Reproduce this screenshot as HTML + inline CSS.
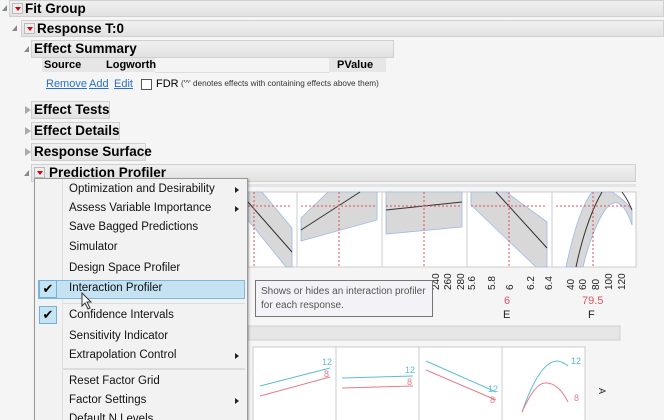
<!DOCTYPE html><html><head><style>
html,body{margin:0;width:664px;height:420px;overflow:hidden}
body{background:#f5f5f5;font-family:"Liberation Sans",sans-serif;position:relative}
.a{position:absolute}
.bar{position:absolute;background:linear-gradient(#f0f0f0,#e2e2e2);border:1px solid #d0d0d0;box-sizing:border-box}
.h{position:absolute;font-weight:bold;font-size:13.5px;color:#000;white-space:nowrap}
.tri{position:absolute;width:0;height:0}
.dn{border-left:5px solid transparent;border-right:0;border-bottom:6px solid #888;}
.rt{border-top:4px solid transparent;border-bottom:4px solid transparent;border-left:6px solid #aaa}
.rb{position:absolute;width:11px;height:11px;background:#eee;border:1px solid #bbb;box-sizing:border-box}
.rb:after{content:"";position:absolute;left:2px;top:3px;border-left:3px solid transparent;border-right:3px solid transparent;border-top:4px solid #d00}
.mi{position:absolute;left:69px;font-size:11.5px;color:#111;white-space:nowrap}
.ar{position:absolute;left:235px;border-top:3px solid transparent;border-bottom:3px solid transparent;border-left:4px solid #222}
.ck{position:absolute;left:39px;width:18px;height:18px;background:#c6e3f3;border:1px solid #6fb3dc;box-sizing:border-box;font-size:13px;text-align:center;line-height:16px;color:#000}
</style></head><body>
<div class="bar" style="left:9px;top:0;width:655px;height:17px"></div>
<div class="tri dn" style="left:2px;top:5px"></div>
<div class="rb" style="left:12px;top:3px"></div>
<div class="h" style="left:25px;top:1px">Fit Group</div>
<div class="bar" style="left:21px;top:20px;width:643px;height:17px"></div>
<div class="tri dn" style="left:12px;top:25px"></div>
<div class="rb" style="left:24px;top:23px"></div>
<div class="h" style="left:37px;top:21px">Response T:0</div>
<div class="bar" style="left:31px;top:40px;width:363px;height:18px"></div>
<div class="tri dn" style="left:24px;top:46px"></div>
<div class="h" style="left:34px;top:41px">Effect Summary</div>
<div class="a" style="left:42px;top:58px;width:344px;height:14px;background:#e6e6e6"></div>
<div class="a" style="left:155px;top:58px;width:174px;height:14px;background:#f4f4f4;border-bottom:1px solid #ddd"></div>
<div class="a" style="left:44px;top:59px;font-size:11px;font-weight:bold">Source</div>
<div class="a" style="left:106px;top:59px;font-size:11px;font-weight:bold">Logworth</div>
<div class="a" style="left:337px;top:59px;font-size:11px;font-weight:bold">PValue</div>
<div class="a" style="left:46px;top:78px;font-size:11px;color:#2a6fc9;text-decoration:underline">Remove</div>
<div class="a" style="left:89px;top:78px;font-size:11px;color:#2a6fc9;text-decoration:underline">Add</div>
<div class="a" style="left:114px;top:78px;font-size:11px;color:#2a6fc9;text-decoration:underline">Edit</div>
<div class="a" style="left:141px;top:79px;width:11px;height:11px;background:#fff;border:1px solid #555;box-sizing:border-box"></div>
<div class="a" style="left:156px;top:78px;font-size:11px">FDR</div>
<div class="a" style="left:181px;top:79px;font-size:8.2px;color:#333;white-space:nowrap">('^' denotes effects with containing effects above them)</div>
<div class="bar" style="left:31px;top:101px;width:79px;height:18px"></div>
<div class="tri rt" style="left:25px;top:106px"></div>
<div class="h" style="left:34px;top:102px">Effect Tests</div>
<div class="bar" style="left:31px;top:122px;width:89px;height:18px"></div>
<div class="tri rt" style="left:25px;top:127px"></div>
<div class="h" style="left:34px;top:123px">Effect Details</div>
<div class="bar" style="left:31px;top:143px;width:115px;height:18px"></div>
<div class="tri rt" style="left:25px;top:148px"></div>
<div class="h" style="left:34px;top:144px">Response Surface</div>
<div class="bar" style="left:31px;top:164px;width:605px;height:18px"></div>
<div class="tri dn" style="left:24px;top:170px"></div>
<div class="rb" style="left:34px;top:167px"></div>
<div class="h" style="left:49px;top:165px">Prediction Profiler</div>
<svg class="a" style="left:240px;top:180px" width="424" height="240">
<rect x="8" y="4" width="388" height="3" fill="#e4e4e4"/>
<g stroke="#ccc" fill="#fff"><rect x="8" y="12" width="49" height="75"/><rect x="57" y="12" width="85" height="75"/><rect x="142" y="12" width="85" height="75"/><rect x="227" y="12" width="85" height="75"/><rect x="312" y="12" width="84" height="75"/></g>
<polygon points="8,12 22,12 52,48 52,87 46,87 8,40" fill="#d8d8d8" stroke="#9bb8ea" stroke-width=".8"/>
<line x1="8" y1="22" x2="52" y2="72" stroke="#333"/>
<polygon points="61,38 88,12 137,12 137,40 61,61" fill="#d8d8d8" stroke="#9bb8ea" stroke-width=".8"/>
<line x1="61" y1="50" x2="120" y2="12" stroke="#333"/>
<polygon points="146,12 222,12 222,47 146,54" fill="#d8d8d8" stroke="#9bb8ea" stroke-width=".8"/>
<line x1="146" y1="30" x2="222" y2="22" stroke="#333"/>
<polygon points="231,12 266,12 307,42 307,87 296,87 231,25" fill="#d8d8d8" stroke="#9bb8ea" stroke-width=".8"/>
<line x1="256" y1="12" x2="307" y2="68" stroke="#333"/>
<path d="M326,87 Q338,30 352,12 L372,12 Q385,20 392,30 L392,45 Q380,10 365,30 Q352,50 343,87 Z" fill="#d8d8d8" stroke="#9bb8ea" stroke-width=".8"/>
<path d="M336,87 Q346,40 362,12" stroke="#333" fill="none"/><path d="M382,12 Q388,20 392,30" stroke="#333" fill="none"/>
<g stroke="#e05060" stroke-dasharray="2,2" fill="none"><line x1="8" y1="26" x2="52" y2="26"/><line x1="14" y1="12" x2="14" y2="87"/><line x1="61" y1="26" x2="137" y2="26"/><line x1="99" y1="12" x2="99" y2="87"/><line x1="146" y1="26" x2="222" y2="26"/><line x1="184" y1="12" x2="184" y2="87"/><line x1="231" y1="26" x2="307" y2="26"/><line x1="269" y1="12" x2="269" y2="87"/><line x1="316" y1="26" x2="392" y2="26"/><line x1="353" y1="12" x2="353" y2="87"/></g>
<g font-size="10" fill="#222" font-family="Liberation Sans">
<text transform="translate(22,110) rotate(-90)">2</text><text transform="translate(63,110) rotate(-90)">4</text><text transform="translate(80,110) rotate(-90)">5</text><text transform="translate(103,110) rotate(-90)">6</text><text transform="translate(122,110) rotate(-90)">7</text><text transform="translate(140,110) rotate(-90)">8</text>
<text transform="translate(150,110) rotate(-90)">0</text><text transform="translate(162,110) rotate(-90)">0</text><text transform="translate(174,110) rotate(-90)">0</text><text transform="translate(187,110) rotate(-90)">0</text>
<text transform="translate(199,110) rotate(-90)">240</text><text transform="translate(211,110) rotate(-90)">260</text><text transform="translate(224,110) rotate(-90)">280</text>
<text transform="translate(235,110) rotate(-90)">5.6</text><text transform="translate(255,110) rotate(-90)">5.8</text><text transform="translate(273,110) rotate(-90)">6</text><text transform="translate(294,110) rotate(-90)">6.2</text><text transform="translate(312,110) rotate(-90)">6.4</text>
<text transform="translate(334,110) rotate(-90)">40</text><text transform="translate(346,110) rotate(-90)">60</text><text transform="translate(359,110) rotate(-90)">80</text><text transform="translate(372,110) rotate(-90)">100</text><text transform="translate(385,110) rotate(-90)">120</text>
</g>
<text x="264" y="124" font-size="11" fill="#e05060" font-family="Liberation Sans">6</text>
<text x="342" y="124" font-size="11" fill="#e05060" font-family="Liberation Sans">79.5</text>
<text x="263" y="138" font-size="11" fill="#222" font-family="Liberation Sans">E</text>
<text x="348" y="138" font-size="11" fill="#222" font-family="Liberation Sans">F</text>
<rect x="8" y="146" width="372" height="14" fill="#e6e6e6" stroke="#d0d0d0"/>
<g stroke="#ccc" fill="#fff"><rect x="13" y="167" width="83" height="80"/><rect x="96" y="167" width="83" height="80"/><rect x="179" y="167" width="83" height="80"/><rect x="262" y="167" width="83" height="80"/></g>
<g fill="none" stroke-width="1"><line x1="20" y1="206" x2="90" y2="188" stroke="#5bbcd6"/><line x1="20" y1="216" x2="90" y2="197" stroke="#e87a8a"/>
<line x1="102" y1="198" x2="173" y2="196" stroke="#5bbcd6"/><line x1="102" y1="208" x2="173" y2="206" stroke="#e87a8a"/>
<line x1="186" y1="181" x2="256" y2="212" stroke="#5bbcd6"/><line x1="186" y1="190" x2="256" y2="220" stroke="#e87a8a"/>
<path d="M282,232 Q300,180 318,181 Q323,182 328,186" stroke="#5bbcd6"/><path d="M282,232 Q295,203 305,203 Q318,202 328,222" stroke="#e87a8a"/></g>
<g font-size="9" font-family="Liberation Sans"><text x="82" y="185" fill="#5bbcd6">12</text><text x="84" y="197" fill="#e87a8a">8</text><text x="165" y="193" fill="#5bbcd6">12</text><text x="167" y="205" fill="#e87a8a">8</text><text x="248" y="212" fill="#5bbcd6">12</text><text x="250" y="223" fill="#e87a8a">8</text><text x="331" y="184" fill="#5bbcd6">12</text><text x="334" y="221" fill="#e87a8a">8</text></g>
<text transform="translate(359,208) rotate(90)" font-size="9" fill="#222" font-family="Liberation Sans">A</text>
</svg>
<div class="a" style="left:255px;top:280px;width:178px;height:37px;background:#f3f3f7;border:1px solid #767676;box-sizing:border-box;font-size:10px;color:#555;padding:4px 0 0 5px;line-height:14px;white-space:nowrap">Shows or hides an interaction profiler<br>for each response.</div>
<div class="a" style="left:34px;top:178px;width:214px;height:250px;background:#f2f2f2;border:1px solid #999;box-sizing:border-box;box-shadow:1px 1px 2px rgba(0,0,0,.3)"></div>
<div class="a" style="left:62px;top:179px;width:1px;height:241px;background:#e2e2e2"></div>
<div class="a" style="left:38px;top:280px;width:207px;height:19px;background:#c5e2f2;border:1px solid #7cb8dd;box-sizing:border-box"></div>
<div class="ck" style="top:280px">✔</div>
<div class="ck" style="top:306px">✔</div>
<div class="a" style="left:63px;top:303px;width:182px;height:1px;background:#dcdcdc"></div>
<div class="a" style="left:63px;top:368px;width:182px;height:2px;background:#dcdcdc"></div>
<div class="mi" style="top:183px">Optimization and Desirability</div><div class="ar" style="top:187px"></div>
<div class="mi" style="top:202px">Assess Variable Importance</div><div class="ar" style="top:206px"></div>
<div class="mi" style="top:221px">Save Bagged Predictions</div>
<div class="mi" style="top:241px">Simulator</div>
<div class="mi" style="top:262px">Design Space Profiler</div>
<div class="mi" style="top:282px">Interaction Profiler</div>
<div class="mi" style="top:309px">Confidence Intervals</div>
<div class="mi" style="top:330px">Sensitivity Indicator</div>
<div class="mi" style="top:349px">Extrapolation Control</div><div class="ar" style="top:353px"></div>
<div class="mi" style="top:375px">Reset Factor Grid</div>
<div class="mi" style="top:394px">Factor Settings</div><div class="ar" style="top:398px"></div>
<div class="mi" style="top:413px">Default N Levels</div>
<svg class="a" style="left:81px;top:292px" width="12" height="18"><path d="M1,1 L1,14 L4,11 L7,17 L9,16 L6,10 L10,10 Z" fill="#fff" stroke="#333" stroke-width="1"/></svg>
</body></html>
